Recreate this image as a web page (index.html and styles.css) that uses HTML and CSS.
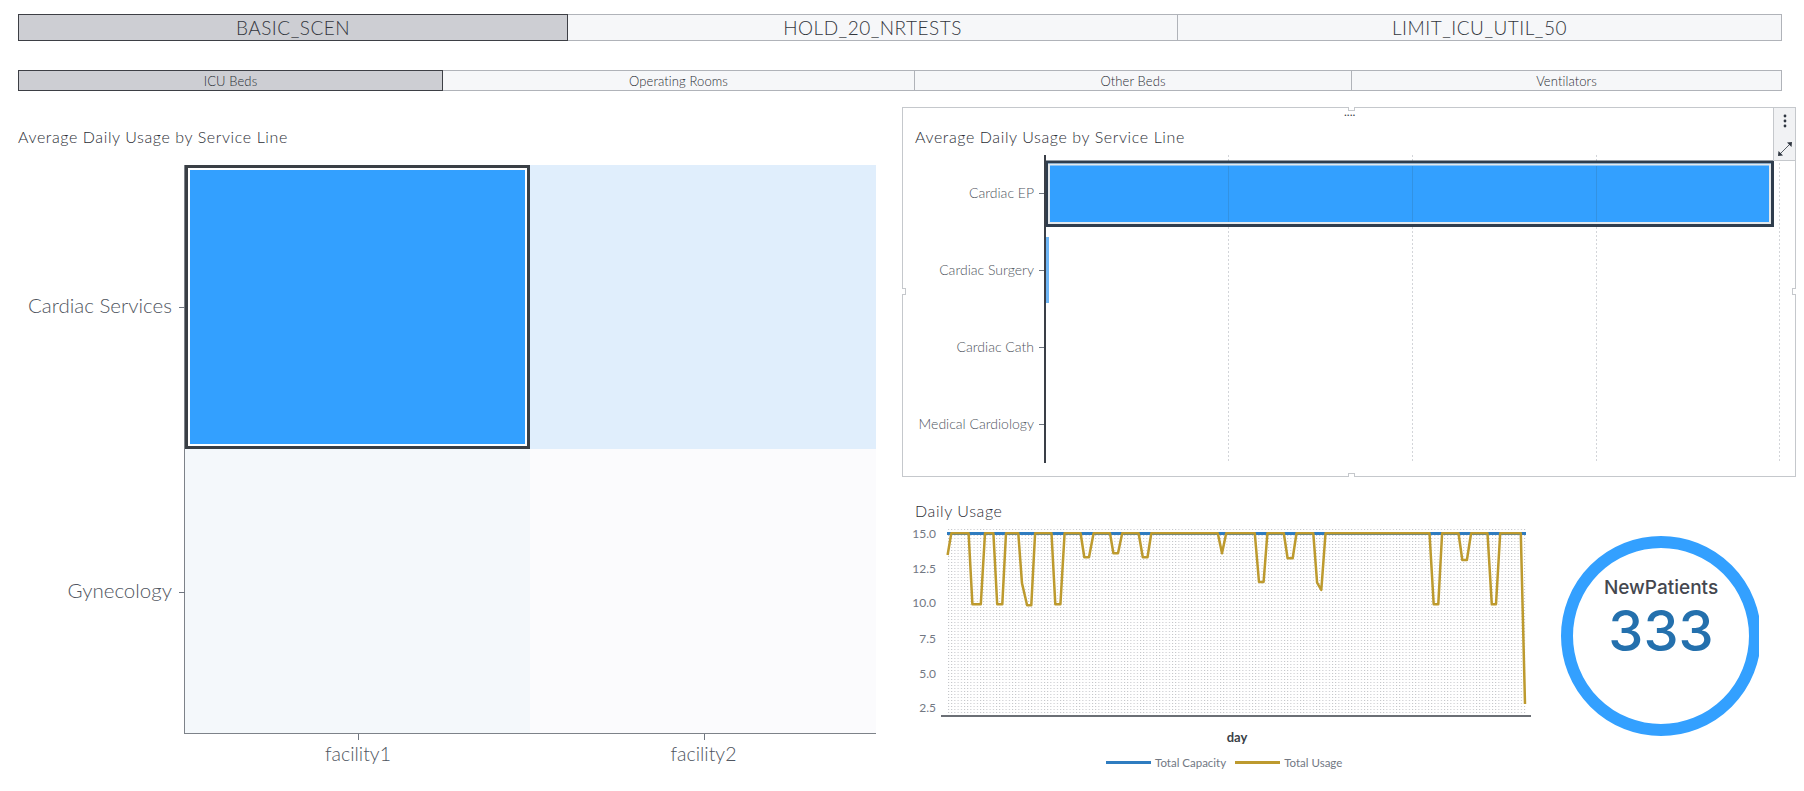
FILE: index.html
```html
<!DOCTYPE html>
<html lang="en">
<head>
    <meta charset="UTF-8">
    <title>Average Daily Usage</title>
    <link rel="stylesheet" href="styles.css">
</head>
<body>

    <!-- scenario tabs -->
    <div class="tabs tabs-big">
        <div class="tab tab-on w-550">BASIC_SCEN</div>
        <div class="tab w-610">HOLD_20_NRTESTS</div>
        <div class="tab grow">LIMIT_ICU_UTIL_50</div>
    </div>

    <!-- resource tabs -->
    <div class="tabs tabs-small">
        <div class="tab tab-on w-425">ICU Beds</div>
        <div class="tab w-472">Operating Rooms</div>
        <div class="tab w-437">Other Beds</div>
        <div class="tab grow">Ventilators</div>
    </div>

    <div class="main">
        <div class="left">
            <h2 class="title">Average Daily Usage by Service Line</h2>
            <div class="heat">
                <div class="heat-y">
                    <div class="heat-y-label">Cardiac Services</div>
                    <div class="heat-y-label">Gynecology</div>
                </div>
                <div class="heat-plot">
                    <div class="cell cell-sel"></div>
                    <div class="cell cell-b"></div>
                    <div class="cell cell-c"></div>
                    <div class="cell cell-d"></div>
                </div>
                <div></div>
                <div class="heat-x">
                    <div class="heat-x-label">facility1</div>
                    <div class="heat-x-label">facility2</div>
                </div>
            </div>
        </div>

        <div class="right">
            <div class="panel">
                <span class="handle handle-top"></span>
                <span class="grip">....</span>
                <span class="handle handle-bottom"></span>
                <span class="handle handle-left"></span>
                <span class="handle handle-right"></span>
                <div class="toolbar">
                    <svg width="22" height="52" viewBox="0 0 22 52">
                        <circle cx="11" cy="8" r="1.4" fill="#2f3640"/>
                        <circle cx="11" cy="13" r="1.4" fill="#2f3640"/>
                        <circle cx="11" cy="18" r="1.4" fill="#2f3640"/>
                        <path d="M6 46 L16 36" stroke="#2f3640" stroke-width="0.8" fill="none"/>
                        <path d="M13 34.5 L18 34 L17.5 39 Z" fill="#2f3640"/>
                        <path d="M4 48 L4.5 43 L9 47.5 Z" fill="#2f3640"/>
                    </svg>
                </div>
                <h2 class="title">Average Daily Usage by Service Line</h2>
                <svg class="bars" width="892" height="320" viewBox="902 150 892 320">
                    <g stroke="#d3d5d9" stroke-dasharray="2 2">
                        <line x1="1227.5" y1="155" x2="1227.5" y2="463"/>
                        <line x1="1411.5" y1="155" x2="1411.5" y2="463"/>
                        <line x1="1595.5" y1="155" x2="1595.5" y2="463"/>
                        <line x1="1778.5" y1="155" x2="1778.5" y2="463"/>
                    </g>
                    <rect x="1045.5" y="162" width="726" height="63.5" fill="#33a0ff" stroke="#2f3d4d" stroke-width="3"/>
                    <rect x="1048" y="164.5" width="721" height="58.5" fill="none" stroke="#e3e8ec" stroke-width="2"/>
                    <g stroke="#33607f" stroke-opacity="0.22">
                        <line x1="1227.5" y1="166" x2="1227.5" y2="222"/>
                        <line x1="1411.5" y1="166" x2="1411.5" y2="222"/>
                        <line x1="1595.5" y1="166" x2="1595.5" y2="222"/>
                    </g>
                    <rect x="1044" y="237" width="4" height="66" fill="#6fb6f5"/>
                    <line x1="1044" y1="155" x2="1044" y2="463" stroke="#3a3f47" stroke-width="2"/>
                    <g stroke="#6f7680">
                        <line x1="1038" y1="193.5" x2="1043" y2="193.5"/>
                        <line x1="1038" y1="270.5" x2="1043" y2="270.5"/>
                        <line x1="1038" y1="347.5" x2="1043" y2="347.5"/>
                        <line x1="1038" y1="424.5" x2="1043" y2="424.5"/>
                    </g>
                    <g class="bar-label">
                        <text x="1033" y="198">Cardiac EP</text>
                        <text x="1033" y="275">Cardiac Surgery</text>
                        <text x="1033" y="352">Cardiac Cath</text>
                        <text x="1033" y="429">Medical Cardiology</text>
                    </g>
                </svg>
            </div>

            <div class="bottom">
                <div class="daily">
                    <h2 class="title">Daily Usage</h2>
                    <svg class="line-chart" width="640" height="230" viewBox="0 32 640 230">
                        <defs>
                            <pattern id="dots" width="3.2" height="3" patternUnits="userSpaceOnUse">
                                <rect width="1" height="1" fill="#bfc1c5"/>
                            </pattern>
                        </defs>
                        <rect x="47" y="39" width="580" height="185" fill="url(#dots)"/>
                        <line x1="41" y1="226" x2="631" y2="226" stroke="#3a3f47" stroke-width="1.5"/>
                        <line x1="47" y1="43.5" x2="626" y2="43.5" stroke="#2f7cc0" stroke-width="3"/>
                        <polyline fill="none" stroke="#bd9a2e" stroke-width="2.5" stroke-linejoin="round" points="47.6,65 51.3,43.3 68.6,43.3 72.4,114.3 80.8,114.3 85,43.3 93.4,43.3 97.2,114.3 102.3,114.3 106,43.3 118.3,43.3 122,93.3 127.1,115.3 131.3,115.3 135.1,43.3 151.5,43.3 155.3,114.3 160.4,114.3 164.6,43.3 180.6,43.3 184.3,67.3 189,67.3 193.6,43.3 210,43.3 213.4,63.3 218,63.3 222.2,43.3 238.6,43.3 242.8,67.3 247.5,67.3 251.3,43.3 317.8,43.3 322,63.3 326.2,43.3 354.8,43.3 359,92 363.6,92 367.4,43.3 383.8,43.3 387.6,68.3 392.7,68.3 396.5,43.3 413.3,43.3 417.1,92.7 421.3,100 425.5,43.3 529.5,43.3 533.7,114.3 538.3,114.3 542.1,43.3 558.5,43.3 562.3,70 566.9,70 571.1,43.3 587.5,43.3 591.8,114.3 596,114.3 600.2,43.3 620.8,43.3 625,214"/>
                        <g class="line-label">
                            <text x="36" y="48">15.0</text>
                            <text x="36" y="82.5">12.5</text>
                            <text x="36" y="117">10.0</text>
                            <text x="36" y="153">7.5</text>
                            <text x="36" y="188">5.0</text>
                            <text x="36" y="222">2.5</text>
                        </g>
                        <text class="axis-name" x="337" y="252">day</text>
                    </svg>
                    <div class="legend">
                        <span class="key key-blue"></span><span class="legend-text">Total Capacity</span>
                        <span class="key key-gold"></span><span class="legend-text">Total Usage</span>
                    </div>
                </div>

                <div class="gauge">
                    <div class="ring">
                        <div class="gauge-name">NewPatients</div>
                        <div class="gauge-num">333</div>
                    </div>
                </div>
            </div>
        </div>
    </div>

</body>
</html>
```

FILE: styles.css
```css
body {
    margin: 0;
    padding: 14px 22px 0 18px;
    height: 791px;
    box-sizing: border-box;
    overflow: hidden;
    background-color: #fff;
    font-family: Lato, "Open Sans", sans-serif;
    color: #33363d;
}
.tabs {
    display: flex;
}
.tabs-big {
    height: 27px;
    margin-bottom: 29px;
    font-size: 19px;
    font-weight: 300;
    letter-spacing: 0.5px;
}
.tabs-small {
    height: 21px;
    font-size: 13px;
    font-weight: 300;
    letter-spacing: 0.1px;
    color: #2b2e35;
}
.tab {
    box-sizing: border-box;
    display: flex;
    align-items: center;
    justify-content: center;
    background-color: #f6f7f9;
    border: 1px solid #b0b3b9;
    border-left: none;
}
.tab-on {
    background-color: #cdced3;
    border: 1px solid #3d3f45;
}
.w-550 { width: 550px; }
.w-610 { width: 610px; }
.w-425 { width: 425px; }
.w-472 { width: 472px; }
.w-437 { width: 437px; }
.grow { flex: 1; }

.main {
    display: grid;
    grid-template-columns: 882px 900px;
    margin-top: 16px;
}
.title {
    width: fit-content;
    margin: 0;
    font-size: 16px;
    font-weight: 300;
    line-height: 18px;
    letter-spacing: 0.6px;
    color: #2b2e35;
}
.left {
    padding-top: 21px;
}

/* heat map */
.heat {
    display: grid;
    grid-template-columns: 167px 691px;
    grid-template-rows: 569px 40px;
    margin-top: 19px;
}
.heat-y {
    display: grid;
    grid-template-rows: 1fr 1fr;
}
.heat-y-label {
    position: relative;
    display: flex;
    align-items: center;
    justify-content: flex-end;
    padding: 0 13px 4px 0;
    font-size: 20.5px;
    font-weight: 300;
    color: #4f5560;
}
.heat-y-label::after {
    content: "";
    position: absolute;
    right: 0;
    top: 50%;
    width: 6px;
    height: 1px;
    background-color: #6f7680;
}
.heat-plot {
    display: grid;
    grid-template-columns: 345px 346px;
    grid-template-rows: 284px 284px;
    border-left: 1px solid #7d8289;
    border-bottom: 1px solid #7d8289;
    margin-left: -1px;
}
.cell-sel {
    box-sizing: border-box;
    background-color: #33a0ff;
    border: 3px solid #3a3f45;
    box-shadow: inset 0 0 0 2px #fff;
}
.cell-b { background-color: #e0eefc; }
.cell-c { background-color: #f4f8fb; }
.cell-d { background-color: #fbfbfd; }
.heat-x {
    display: grid;
    grid-template-columns: 346px 345px;
}
.heat-x-label {
    position: relative;
    padding-top: 8px;
    text-align: center;
    font-size: 19.5px;
    font-weight: 300;
    color: #4f5560;
}
.heat-x-label::before {
    content: "";
    position: absolute;
    top: 0;
    left: 50%;
    width: 1px;
    height: 6px;
    background-color: #6f7680;
}

/* bar panel */
.panel {
    position: relative;
    box-sizing: border-box;
    width: 894px;
    height: 370px;
    margin-left: 2px;
    padding: 20px 0 0 12px;
    border: 1px solid #c5c8cc;
}
.bars {
    display: block;
    margin: 4px 0 0 -12px;
}
.bar-label text {
    font-size: 14px;
    font-weight: 300;
    fill: #4f5560;
    text-anchor: end;
}
.toolbar {
    position: absolute;
    top: -1px;
    right: -1px;
    width: 23px;
    height: 54px;
    box-sizing: border-box;
    background-color: #f1f2f4;
    border: 1px solid #c5c8cc;
}
.toolbar svg {
    display: block;
}
.handle {
    position: absolute;
    background-color: #fff;
    border: 1px solid #c5c8cc;
}
.handle-top {
    top: -1px;
    left: 445px;
    width: 5px;
    height: 3px;
    border-top: none;
}
.handle-bottom {
    bottom: -1px;
    left: 445px;
    width: 5px;
    height: 3px;
    border-bottom: none;
}
.handle-left {
    top: 180px;
    left: -1px;
    width: 3px;
    height: 5px;
    border-left: none;
}
.handle-right {
    top: 180px;
    right: -1px;
    width: 3px;
    height: 5px;
    border-right: none;
}
.grip {
    position: absolute;
    top: -3px;
    left: 441px;
    font-size: 12px;
    line-height: 14px;
    color: #3a3f47;
}

/* bottom row */
.bottom {
    display: flex;
    margin-top: 26px;
}
.daily {
    width: 640px;
}
.daily .title {
    margin-left: 15px;
    margin-top: -1px;
}
.line-chart {
    display: block;
    margin-top: 2px;
}
.line-label text {
    font-size: 12px;
    font-weight: 400;
    fill: #727883;
    text-anchor: end;
}
.axis-name {
    font-size: 13px;
    font-weight: 700;
    fill: #3a3f47;
    text-anchor: middle;
}
.legend {
    display: flex;
    align-items: center;
    margin: 4px 0 0 206px;
    font-size: 11.5px;
    font-weight: 400;
    color: #727883;
}
.key {
    width: 45px;
    height: 3px;
    margin-right: 4px;
}
.key-blue { background-color: #2f7cc0; }
.key-gold { background-color: #bd9a2e; }
.legend-text {
    margin-right: 9px;
}

/* gauge */
.gauge {
    width: 198px;
    height: 200px;
    margin: 33px 0 0 21px;
    overflow: hidden;
}
.ring {
    box-sizing: border-box;
    width: 200px;
    height: 200px;
    padding-top: 28px;
    border: 12px solid #33a0ff;
    border-radius: 50%;
    text-align: center;
    font-family: Inter, Roboto, sans-serif;
}
.gauge-name {
    font-size: 19px;
    font-weight: 500;
    line-height: 24px;
    color: #44474f;
}
.gauge-num {
    font-size: 56px;
    font-weight: 500;
    line-height: 62px;
    color: #2470ad;
}
```
